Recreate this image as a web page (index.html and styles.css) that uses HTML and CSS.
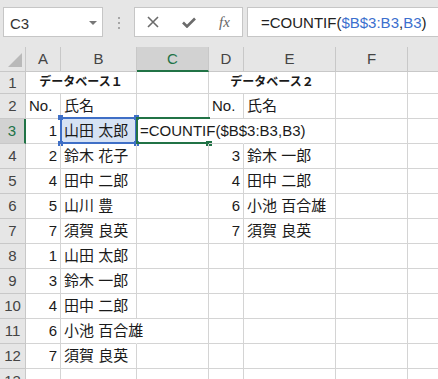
FILE: index.html
```html
<!DOCTYPE html>
<html lang="ja">
<head>
  <meta charset="UTF-8" />
  <meta name="viewport" content="width=device-width, initial-scale=1.0"/>
  <title>COUNTIF</title>
  <link rel="stylesheet" href="styles.css">
</head>
<body>

  <div class="topbar">
    <div class="namebox"><span>C3</span><span class="arrow"></span></div>
    <div class="grip"><i></i><i></i><i></i></div>
    <div class="fbtns">
      <span><svg width="12" height="12" viewBox="0 0 12 12"><path d="M1 1 L11 11 M11 1 L1 11" stroke="#6b6b6b" stroke-width="1.6" fill="none"/></svg></span>
      <span><svg width="14" height="11" viewBox="0 0 14 11"><path d="M1 5.5 L5 9.5 L13 1.5" stroke="#6b6b6b" stroke-width="2.6" fill="none"/></svg></span>
      <span class="fx">fx</span>
    </div>
    <div class="formula">=COUNTIF(<span class="ref">$B$3:B3</span>,<span class="ref">B3</span>)</div>
  </div>

  <div class="sheet">
    <!-- column headers -->
    <div class="hd corner"><svg width="25" height="24" viewBox="0 0 25 24"><path d="M8 20 L22 6 L22 20 Z" fill="#b9b9b9"/></svg></div>
    <div class="hd">A</div>
    <div class="hd">B</div>
    <div class="hd on">C</div>
    <div class="hd">D</div>
    <div class="hd">E</div>
    <div class="hd">F</div>
    <div class="hd"></div>

    <div class="rh r1">1</div>
    <div class="c t">データベース１</div>
    <div class="c r1"></div>
    <div class="c t">データベース２</div>
    <div class="c r1"></div>
    <div class="c r1"></div>

    <div class="rh">2</div>
    <div class="c">No.</div>
    <div class="c">氏名</div>
    <div class="c"></div>
    <div class="c">No.</div>
    <div class="c">氏名</div>
    <div class="c"></div>
    <div class="c"></div>

    <div class="rh on">3</div>
    <div class="c n">1</div>
    <div class="c picked">山田 太郎<div class="refbox"><i class="tl"></i><i class="tr"></i><i class="bl"></i><i class="br"></i></div></div>
    <div class="c spill">=COUNTIF($B$3:B3,B3)<div class="cur"><i></i></div></div>
    <div class="c spill"></div>
    <div class="c"></div>
    <div class="c"></div>
    <div class="c"></div>

    <div class="rh">4</div>
    <div class="c n">2</div>
    <div class="c">鈴木 花子</div>
    <div class="c"></div>
    <div class="c n">3</div>
    <div class="c">鈴木 一郎</div>
    <div class="c"></div>
    <div class="c"></div>

    <div class="rh">5</div>
    <div class="c n">4</div>
    <div class="c">田中 二郎</div>
    <div class="c"></div>
    <div class="c n">4</div>
    <div class="c">田中 二郎</div>
    <div class="c"></div>
    <div class="c"></div>

    <div class="rh">6</div>
    <div class="c n">5</div>
    <div class="c">山川 豊</div>
    <div class="c"></div>
    <div class="c n">6</div>
    <div class="c">小池 百合雄</div>
    <div class="c"></div>
    <div class="c"></div>

    <div class="rh">7</div>
    <div class="c n">7</div>
    <div class="c">須賀 良英</div>
    <div class="c"></div>
    <div class="c n">7</div>
    <div class="c">須賀 良英</div>
    <div class="c"></div>
    <div class="c"></div>

    <div class="rh">8</div>
    <div class="c n">1</div>
    <div class="c">山田 太郎</div>
    <div class="c"></div>
    <div class="c"></div>
    <div class="c"></div>
    <div class="c"></div>
    <div class="c"></div>

    <div class="rh">9</div>
    <div class="c n">3</div>
    <div class="c">鈴木 一郎</div>
    <div class="c"></div>
    <div class="c"></div>
    <div class="c"></div>
    <div class="c"></div>
    <div class="c"></div>

    <div class="rh">10</div>
    <div class="c n">4</div>
    <div class="c">田中 二郎</div>
    <div class="c"></div>
    <div class="c"></div>
    <div class="c"></div>
    <div class="c"></div>
    <div class="c"></div>

    <div class="rh">11</div>
    <div class="c n">6</div>
    <div class="c spill">小池 百合雄</div>
    <div class="c"></div>
    <div class="c"></div>
    <div class="c"></div>
    <div class="c"></div>
    <div class="c"></div>

    <div class="rh">12</div>
    <div class="c n">7</div>
    <div class="c">須賀 良英</div>
    <div class="c"></div>
    <div class="c"></div>
    <div class="c"></div>
    <div class="c"></div>
    <div class="c"></div>

    <div class="rh">13</div>
    <div class="c"></div>
    <div class="c"></div>
    <div class="c"></div>
    <div class="c"></div>
    <div class="c"></div>
    <div class="c"></div>
    <div class="c"></div>
  </div>

</body>
</html>
```

FILE: styles.css
```css
body {
  margin: 0;
  width: 438px;
  height: 379px;
  overflow: hidden;
  font-family: "Liberation Sans", "Noto Sans CJK JP", sans-serif;
  font-size: 15px;
  color: #1a1a1a;
  background: #fff;
}

/* formula bar */
.topbar {
  display: flex;
  align-items: flex-start;
  height: 47px;
  box-sizing: border-box;
  padding: 7px 0 0 3px;
  background: #e6e6e6;
}

.namebox {
  width: 100px;
  height: 30px;
  box-sizing: border-box;
  background: #fff;
  border: 1px solid #c6c6c6;
  display: flex;
  align-items: center;
  justify-content: space-between;
  padding: 3px 5px 0 6px;
  color: #333;
}

.arrow {
  width: 0;
  height: 0;
  margin-bottom: 2px;
  border-left: 4px solid transparent;
  border-right: 4px solid transparent;
  border-top: 4px solid #777;
}

.grip {
  width: 31px;
  display: flex;
  flex-direction: column;
  align-items: center;
  gap: 3px;
  padding-top: 10px;
}

.grip i {
  width: 2px;
  height: 2px;
  background: #a6a6a6;
}

.fbtns {
  width: 109px;
  height: 30px;
  box-sizing: border-box;
  border: 1px solid #c6c6c6;
  background: #fff;
  display: flex;
}

.fbtns span {
  width: 36px;
  display: flex;
  align-items: center;
  justify-content: center;
}

.fbtns .fx {
  width: 35px;
  font-family: "Liberation Serif", serif;
  font-style: italic;
  font-size: 15px;
  color: #666;
}

.formula {
  flex: 1;
  height: 30px;
  margin-left: 4px;
  box-sizing: border-box;
  border: 1px solid #c6c6c6;
  border-right: none;
  background: #fff;
  padding: 1px 0 0 13px;
  line-height: 27px;
  white-space: nowrap;
  color: #222;
}

.ref {
  color: #3b6fce;
}

/* sheet grid */
.sheet {
  display: grid;
  grid-template-columns: 26px 35px 76px 72px 35px 92px 72px 72px;
  grid-template-rows: 25px 22px repeat(12, 25px);
}

.hd, .rh, .c {
  box-sizing: border-box;
  border-right: 1px solid #d4d4d4;
  border-bottom: 1px solid #d4d4d4;
  white-space: nowrap;
  line-height: 24px;
}

.hd, .rh {
  background: #e6e6e6;
  border-color: #c8c8c8;
  text-align: center;
  color: #444;
}

.corner svg {
  display: block;
}

.hd.on, .rh.on {
  background: #d2d2d2;
  color: #217346;
}

.hd.on {
  border-bottom: 2px solid #217346;
  line-height: 23px;
}

.rh.on {
  border-right: 2px solid #217346;
}

.rh.r1, .c.r1 {
  line-height: 21px;
}

.c {
  position: relative;
  padding: 0 3px;
}

.n {
  text-align: right;
}

.t {
  grid-column: span 2;
  text-align: center;
  font-weight: bold;
  font-size: 12px;
  line-height: 21px;
}

.spill {
  border-right-color: transparent;
}

/* selections */
.picked {
  background: #d6e2f4;
}

.refbox {
  position: absolute;
  left: -1px;
  top: -2px;
  width: 77px;
  height: 27px;
  box-sizing: border-box;
  border: 2px solid #3f6fc6;
}

.refbox i {
  position: absolute;
  width: 5px;
  height: 5px;
  background: #3f6fc6;
}

.refbox .tl { left: -4px; top: -4px; }
.refbox .tr { right: -4px; top: -4px; }
.refbox .bl { left: -4px; bottom: -4px; }
.refbox .br { right: -4px; bottom: -4px; }

.cur {
  position: absolute;
  left: -1px;
  top: -2px;
  width: 74px;
  height: 27px;
  box-sizing: border-box;
  border: 2px solid #217346;
  border-right: none;
}

.cur i {
  position: absolute;
  right: -2px;
  bottom: -4px;
  width: 6px;
  height: 5px;
  background: #217346;
}
```
